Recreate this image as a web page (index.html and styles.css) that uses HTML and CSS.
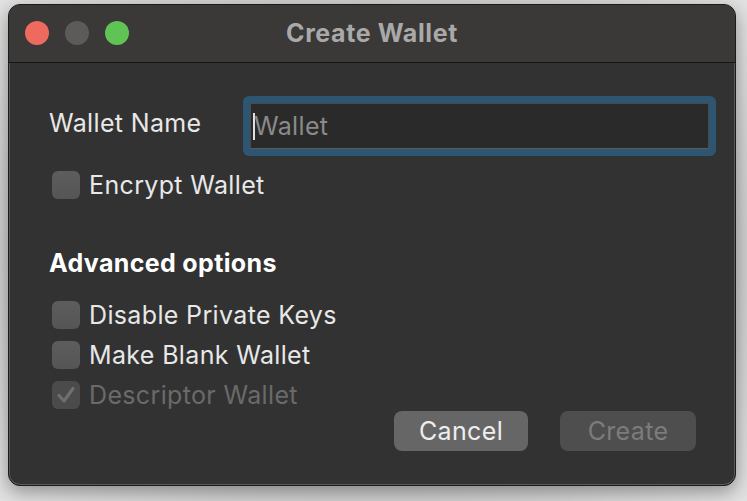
FILE: index.html
```html
<!DOCTYPE html>
<html>
<head>
<meta charset="utf-8">
<link rel="stylesheet" href="styles.css">
</head>
<body>
<div class="window">
  <div class="titlebar">
    <div class="lights">
      <span class="light red"></span>
      <span class="light grey"></span>
      <span class="light green"></span>
    </div>
    <div class="title">Create Wallet</div>
  </div>
  <div class="content">
    <div class="name-row">
      <label class="name-label">Wallet Name</label>
      <div class="focus-ring">
        <div class="field"><span class="caret"></span><span class="placeholder">Wallet</span></div>
      </div>
    </div>
    <div class="check-row encrypt"><span class="box"></span><span class="check-text">Encrypt Wallet</span></div>
    <div class="section">Advanced options</div>
    <div class="check-row"><span class="box"></span><span class="check-text">Disable Private Keys</span></div>
    <div class="check-row"><span class="box"></span><span class="check-text">Make Blank Wallet</span></div>
    <div class="bottom">
      <div class="check-row disabled"><span class="box checked"><svg viewBox="0 0 28 28" width="28" height="28"><path d="M7 14.5 L12 20 L21 7.5" fill="none" stroke="#6f6f6f" stroke-width="3.2" stroke-linecap="round" stroke-linejoin="round"/></svg></span><span class="check-text">Descriptor Wallet</span></div>
      <div class="buttons">
        <button class="btn cancel">Cancel</button>
        <button class="btn create">Create</button>
      </div>
    </div>
  </div>
</div>
</body>
</html>
```
FILE: styles.css
```css
* { box-sizing: border-box; }
html, body { margin: 0; padding: 0; }
body {
  width: 747px;
  height: 501px;
  background: radial-gradient(ellipse at center, #bdbdbd 0%, #c8c8c8 60%, #e2e2e2 100%);
  font-family: "Inter", "Liberation Sans", sans-serif;
  padding: 4px 0 0 8px;
  overflow: hidden;
}
.window {
  width: 728px;
  height: 482px;
  background: #323232;
  border-radius: 12px;
  border: 1px solid #1b1b1b;
  box-shadow: 0 0 0 1px #5a5a5a inset, 0 6px 18px rgba(0,0,0,0.35);
  overflow: hidden;
  display: flex;
  flex-direction: column;
}
.titlebar {
  height: 58px;
  background: #3a3937;
  border-bottom: 1px solid #151515;
  position: relative;
  display: flex;
  align-items: center;
  justify-content: center;
  flex-shrink: 0;
}
.lights {
  position: absolute;
  left: 16px;
  top: 16px;
  display: flex;
  gap: 16px;
}
.light { width: 24px; height: 24px; border-radius: 50%; display: block; }
.red { background: #ee6a5f; }
.grey { background: #5c5b5a; }
.green { background: #5fc454; }
.title {
  color: #a9a9a9;
  font-weight: 700;
  font-size: 25px;
  letter-spacing: 0.6px;
  margin-top: -1px;
}
.content {
  padding: 33px 19px 0 40px;
  display: flex;
  flex-direction: column;
}
.name-row {
  display: flex;
  align-items: center;
  height: 60px;
}
.name-label {
  color: #e8e8e8;
  font-size: 25px;
  letter-spacing: 0.35px;
  width: 194px;
  flex-shrink: 0;
  margin-top: -6px;
}
.focus-ring {
  width: 473px;
  height: 60px;
  flex-shrink: 0;
  border-radius: 6px;
  background: #2e5571;
  padding: 7px;
}
.field {
  height: 100%;
  background: #2a2a2a;
  border: 1px solid #4a4a4a;
  border-bottom-color: #5a5a5a;
  display: flex;
  align-items: center;
  padding-left: 2px;
}
.caret { width: 2px; height: 27px; background: #e0e0e0; display: block; }
.placeholder { color: #8a8a8a; font-size: 25px; letter-spacing: 0.35px; margin-left: -1px; }
.check-row {
  display: flex;
  align-items: center;
  height: 40px;
}
.encrypt { margin-top: 9px; }
.box {
  width: 28px;
  height: 28px;
  border-radius: 6px;
  background: linear-gradient(#5d5d5d, #555555);
  margin-left: 3px;
  margin-right: 9px;
  display: block;
  flex-shrink: 0;
}
.check-text { color: #e8e8e8; font-size: 25px; letter-spacing: 0.35px; }
.section {
  color: #ffffff;
  font-weight: 700;
  font-size: 25px;
  letter-spacing: 0.35px;
  margin-top: 39px;
  height: 40px;
  line-height: 38px;
  margin-bottom: 11px;
}
.bottom {
  display: flex;
  align-items: flex-start;
}
.disabled .box { background: #4b4b4b; }
.disabled .check-text { color: #6a6a6a; }
.buttons {
  display: flex;
  gap: 32px;
  margin-left: auto;
  margin-right: 20px;
  margin-top: 36px;
}
.btn {
  font-family: "Inter", "Liberation Sans", sans-serif;
  font-size: 25px;
  letter-spacing: 0.35px;
  height: 40px;
  border: none;
  border-radius: 8px;
  padding: 0;
}
.cancel { width: 134px; background: #666666; color: #eeeeee; }
.create { width: 136px; background: #4e4e4e; color: #7c7c7c; }
```
